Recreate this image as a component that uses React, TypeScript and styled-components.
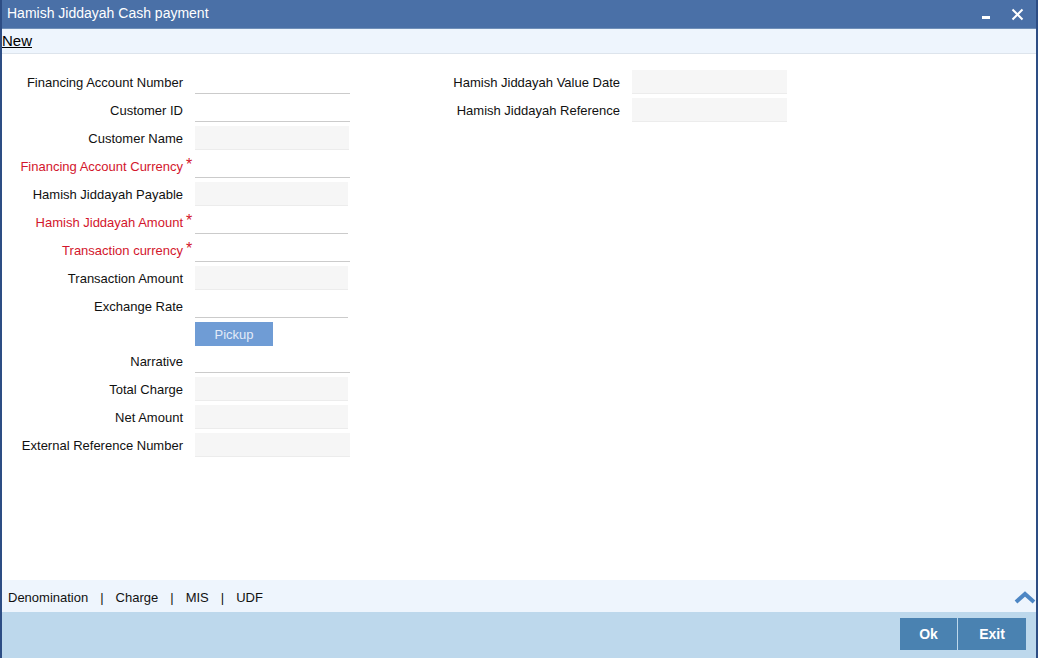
import React from "react";
import styled, {createGlobalStyle} from "styled-components";

const GlobalStyle = createGlobalStyle`
  html, body {
    margin: 0;
    padding: 0;
    background: #ffffff;
  }
  body {
    font-family: "Liberation Sans", Arial, sans-serif;
    font-size: 13px;
    color: #111;
  }
`;

const Window = styled.div`
  width: 1038px;
  height: 658px;
  box-sizing: border-box;
  display: flex;
  flex-direction: column;
  border-left: 2px solid #2d4d84;
  border-right: 2px solid #2d4d84;
  overflow: hidden;
`;

const TitleBar = styled.div`
  height: 28px;
  flex: none;
  display: flex;
  align-items: center;
  justify-content: space-between;
  background: #4a70a7;
  border-bottom: 1px solid #6f8fb8;
  padding: 0 12px 0 5px;
  color: #fff;
  font-size: 14px;
`;

const TitleText = styled.span`
  padding-bottom: 2px;
`;

const WinControls = styled.div`
  display: flex;
  align-items: center;
  gap: 20px;
`;

const Toolbar = styled.div`
  height: 24px;
  flex: none;
  display: flex;
  align-items: center;
  background: #eef5fd;
  border-bottom: 1px solid #dde4ec;
`;

const NewLink = styled.a`
  color: #000;
  font-size: 15px;
  text-decoration: underline;
  cursor: pointer;
  margin-top: -2px;
`;

const Content = styled.div`
  flex: 1;
  display: flex;
  align-items: flex-start;
  padding-top: 16px;
`;

const FormGrid = styled.div<{ $labelWidth: number; $rows?: string }>`
  display: grid;
  grid-template-columns: ${p => p.$labelWidth}px 12px 155px;
  grid-template-rows: ${p => p.$rows ?? "none"};
  grid-auto-rows: 24px;
  row-gap: 4px;
  align-items: center;
`;

const Label = styled.div<{ $required?: boolean }>`
  text-align: right;
  white-space: nowrap;
  color: ${p => (p.$required ? "#d3162c" : "#111")};
`;

const Star = styled.div`
  color: #d3162c;
  font-size: 16px;
  line-height: 16px;
  padding-left: 3px;
  align-self: start;
  margin-top: 3px;
`;

const Field = styled.div<{ $readonly?: boolean; $w?: number }>`
  height: 24px;
  box-sizing: border-box;
  width: ${p => p.$w ?? 155}px;
  background: ${p => (p.$readonly ? "#f6f6f6" : "#fff")};
  border-bottom: 1px solid ${p => (p.$readonly ? "#ececec" : "#cbcbcb")};
`;

const PickupButton = styled.button`
  grid-column: 3;
  align-self: start;
  width: 78px;
  height: 24px;
  border: none;
  background: #6f9cd5;
  color: #e3ebf8;
  font-family: "Liberation Sans", Arial, sans-serif;
  font-size: 13px;
  padding: 0;
`;

const TabBar = styled.div`
  height: 32px;
  flex: none;
  display: flex;
  align-items: center;
  justify-content: space-between;
  background: #eef5fd;
  padding: 2px 0 0 6px;
  box-sizing: border-box;
`;

const Tabs = styled.div`
  display: flex;
  align-items: center;
`;

const Sep = styled.span`
  margin: 0 12px 0 12px;
`;

const Footer = styled.div`
  height: 46px;
  flex: none;
  display: flex;
  justify-content: flex-end;
  align-items: flex-start;
  background: #bdd8ec;
  padding: 6px 10px 0 0;
  box-sizing: border-box;
  gap: 1px;
`;

const FooterButton = styled.button<{ $w: number }>`
  width: ${p => p.$w}px;
  height: 32px;
  border: none;
  background: #4a82b1;
  color: #fff;
  font-family: "Liberation Sans", Arial, sans-serif;
  font-weight: bold;
  font-size: 14px;
  padding: 0;
`;

type Row = { label: string; required?: boolean; readonly?: boolean; w?: number };

const leftRows: Row[] = [
  {label: "Financing Account Number"},
  {label: "Customer ID"},
  {label: "Customer Name", readonly: true, w: 154},
  {label: "Financing Account Currency", required: true},
  {label: "Hamish Jiddayah Payable", readonly: true, w: 153},
  {label: "Hamish Jiddayah Amount", required: true, w: 153},
  {label: "Transaction currency", required: true},
  {label: "Transaction Amount", readonly: true, w: 153},
  {label: "Exchange Rate", w: 153},
];

const leftRows2: Row[] = [
  {label: "Narrative"},
  {label: "Total Charge", readonly: true, w: 153},
  {label: "Net Amount", readonly: true, w: 153},
  {label: "External Reference Number", readonly: true},
];

const rightRows: Row[] = [
  {label: "Hamish Jiddayah Value Date", readonly: true},
  {label: "Hamish Jiddayah Reference", readonly: true},
];

function renderRows(rows: Row[]) {
  return rows.map(r => (
    <React.Fragment key={r.label}>
      <Label $required={r.required}>{r.label}</Label>
      {r.required ? <Star>*</Star> : <span/>}
      <Field $readonly={r.readonly} $w={r.w}/>
    </React.Fragment>
  ));
}

export default function App(): React.JSX.Element {
  return (
    <>
      <GlobalStyle/>
      <Window>
        <TitleBar>
          <TitleText>Hamish Jiddayah Cash payment</TitleText>
          <WinControls>
            <svg width="10" height="12" viewBox="0 0 10 12">
              <rect x="1" y="8" width="8" height="3" fill="#fff"/>
            </svg>
            <svg width="13" height="13" viewBox="0 0 13 13">
              <path d="M1.5 1.5 L11.5 11.5 M11.5 1.5 L1.5 11.5" stroke="#fff" strokeWidth="2"/>
            </svg>
          </WinControls>
        </TitleBar>
        <Toolbar>
          <NewLink>New</NewLink>
        </Toolbar>
        <Content>
          <FormGrid $labelWidth={181} $rows="repeat(9, 24px) 23px">
            {renderRows(leftRows)}
            <PickupButton>Pickup</PickupButton>
            {renderRows(leftRows2)}
          </FormGrid>
          <FormGrid $labelWidth={270}>
            {renderRows(rightRows)}
          </FormGrid>
        </Content>
        <TabBar>
          <Tabs>
            <span>Denomination</span>
            <Sep>|</Sep>
            <span>Charge</span>
            <Sep>|</Sep>
            <span>MIS</span>
            <Sep>|</Sep>
            <span>UDF</span>
          </Tabs>
          <svg width="22" height="14" viewBox="0 0 22 14">
            <path d="M2 12 L11 4 L20 12" stroke="#4d86c4" strokeWidth="4" fill="none"/>
          </svg>
        </TabBar>
        <Footer>
          <FooterButton $w={57}>Ok</FooterButton>
          <FooterButton $w={68}>Exit</FooterButton>
        </Footer>
      </Window>
    </>
  );
}
